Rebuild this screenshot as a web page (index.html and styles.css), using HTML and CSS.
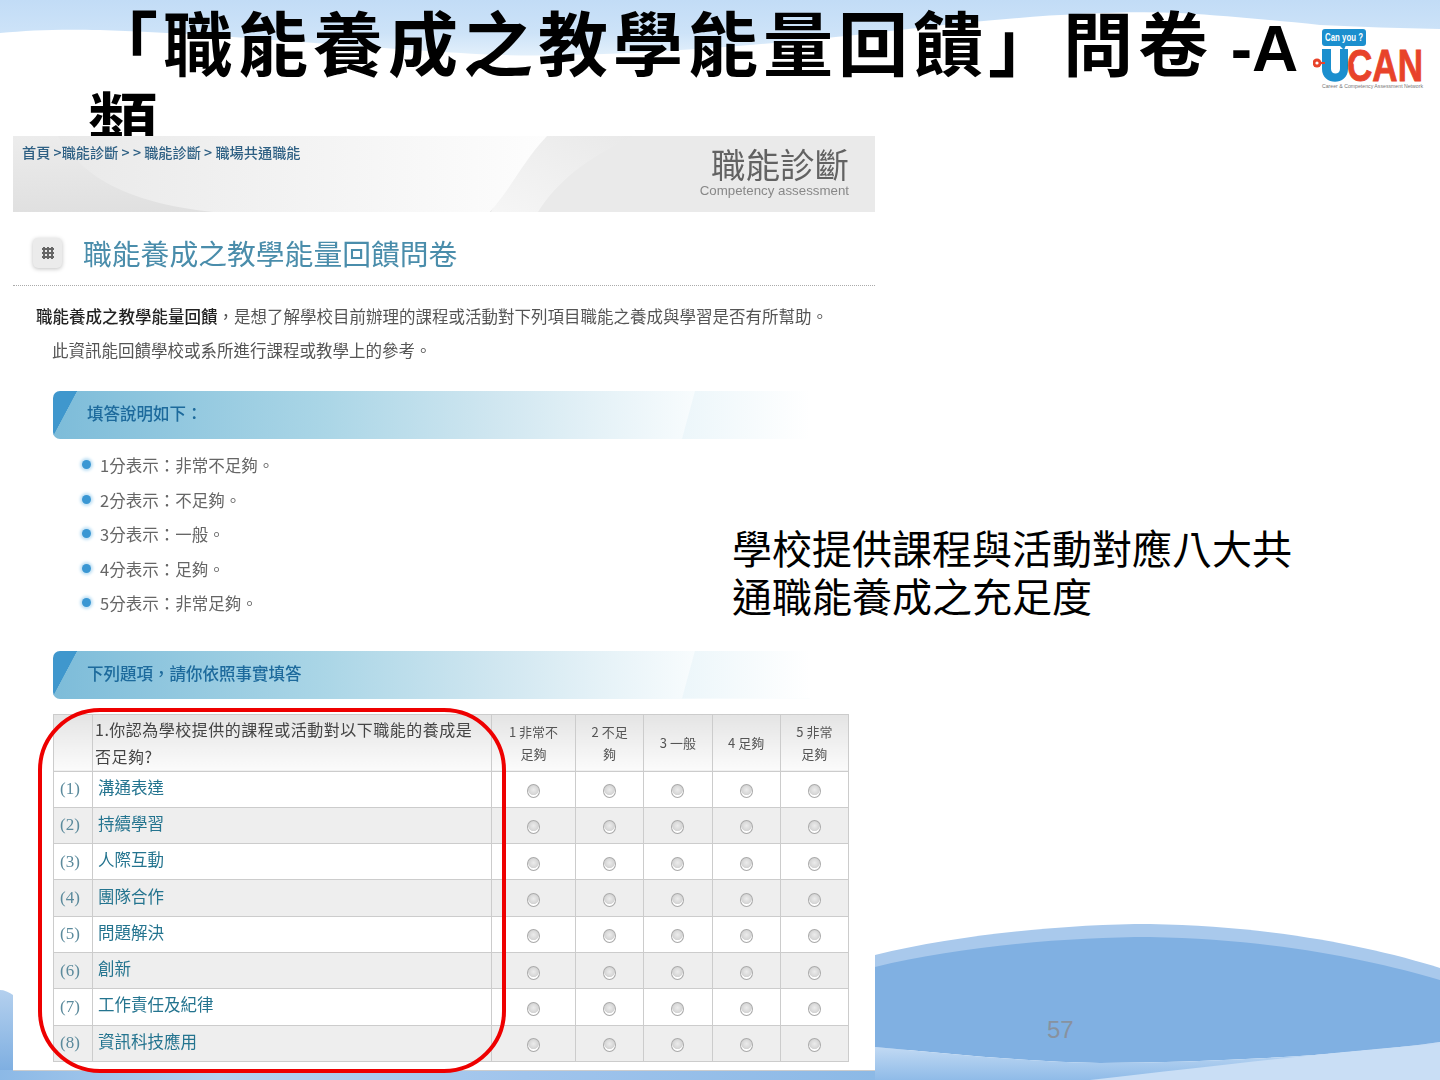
FILE: index.html
```html
<!DOCTYPE html>
<html lang="zh-Hant">
<head>
    <meta charset="UTF-8">
    <title>職能養成之教學能量回饋問卷</title>
    <link rel="stylesheet" href="styles.css">
</head>
<body>
    <div class="slide">
        <!-- slide background waves -->
        <svg class="slide-bg" width="1440" height="1080" viewBox="0 0 1440 1080">
            <defs>
                <linearGradient id="topWave" x1="0" y1="0" x2="0" y2="1">
                    <stop offset="0" stop-color="#c2dcf6"/>
                    <stop offset="0.6" stop-color="#cde3f8"/>
                    <stop offset="1" stop-color="#e3f0fb"/>
                </linearGradient>
                <linearGradient id="lowWave" x1="0" y1="0" x2="0" y2="1">
                    <stop offset="0" stop-color="#c9def5"/>
                    <stop offset="1" stop-color="#8fbbe8"/>
                </linearGradient>
                <linearGradient id="bottomStrip" x1="0" y1="0" x2="1" y2="0">
                    <stop offset="0" stop-color="#8cb9e6"/>
                    <stop offset="0.25" stop-color="#b4d2f0"/>
                    <stop offset="0.6" stop-color="#a0c4ec"/>
                    <stop offset="1" stop-color="#8cb9e6"/>
                </linearGradient>
                <linearGradient id="leftPiece" x1="0" y1="0" x2="0" y2="1">
                    <stop offset="0" stop-color="#b4d0ee"/>
                    <stop offset="1" stop-color="#7fafe1"/>
                </linearGradient>
            </defs>
            <path d="M0 0H1440V29C1400 28 1360 27 1320 25C1270 20 1230 16 1180 13C1100 10 1000 18 900 30C780 44 620 58 500 55C380 50 230 34 100 30C60 29 30 30 0 33Z" fill="url(#topWave)"/>
            <path d="M875 955C960 934 1070 924 1150 924C1270 926 1370 946 1440 968V1050H875Z" fill="#a9c9ec"/>
            <path d="M875 967C960 946 1070 937 1150 937C1270 939 1370 959 1440 980V1042C1340 1056 1220 1062 1100 1063C1030 1062 950 1054 875 1047Z" fill="#80b0e2"/>
            <path d="M875 1047C950 1054 1030 1062 1100 1063C1220 1062 1340 1056 1440 1042V1080H875Z" fill="url(#lowWave)"/>
            <path d="M1090 1080C1230 1064 1350 1050 1440 1044V1080Z" fill="#c9def5"/>
            <path d="M0 990C4 990 9 992 13 995V1070H0Z" fill="url(#leftPiece)"/>
            <rect x="0" y="1070" width="875" height="10" fill="url(#bottomStrip)"/>
        </svg>

        <h1 class="slide-title">「職能養成之教學能量回饋」問卷<span class="title-latin"> -A</span><br>類</h1>

        <svg class="ucan-logo" width="127" height="64" viewBox="0 0 127 64">
            <rect x="9" y="0" width="44" height="17" rx="3" fill="#1b8fce"/>
            <path d="M26 16h7l-2 5z" fill="#1b8fce"/>
            <text class="ucan-can-you" x="12" y="12" textLength="38" lengthAdjust="spacingAndGlyphs">Can you ?</text>
            <path d="M9 20H18V40C18 46 27 46 27 40V20H35V40C35 57 9 57 9 40Z" fill="#1b8fce"/>
            <text class="ucan-can" x="34" y="52" textLength="76" lengthAdjust="spacingAndGlyphs">CAN</text>
            <circle cx="4" cy="34" r="4.5" fill="#e8432a"/>
            <circle cx="4" cy="34" r="1.6" fill="#fff"/>
            <rect x="8" y="33" width="4" height="2" fill="#e8432a"/>
            <circle cx="42" cy="34" r="1.8" fill="#fff"/>
            <circle cx="50" cy="34" r="1.8" fill="#fff"/>
            <text class="ucan-sub" x="9" y="59" textLength="101" lengthAdjust="spacingAndGlyphs">Career &amp; Competency Assessment Network</text>
        </svg>

        <!-- captured page pasted on the slide -->
        <div class="capture">
            <div class="crumb-band">
                <svg class="crumb-bg" width="862" height="76" viewBox="0 0 862 76">
                    <defs>
                        <linearGradient id="band" x1="0" y1="0" x2="0" y2="1">
                            <stop offset="0" stop-color="#ececec"/>
                            <stop offset="1" stop-color="#e0e0e0"/>
                        </linearGradient>
                        <linearGradient id="bandLight" x1="0" y1="0" x2="1" y2="0">
                            <stop offset="0" stop-color="#e9e9e9"/>
                            <stop offset="1" stop-color="#fdfdfd"/>
                        </linearGradient>
                        <linearGradient id="bandSoft" x1="0" y1="1" x2="1" y2="0">
                            <stop offset="0" stop-color="#f6f6f6"/>
                            <stop offset="1" stop-color="#e9e9e9"/>
                        </linearGradient>
                    </defs>
                    <rect width="862" height="76" fill="url(#band)"/>
                    <path d="M480 76C500 50 520 25 590 0H862V76Z" fill="#eaeaea"/>
                    <path d="M525 76C545 45 570 25 620 0H470C510 25 490 50 478 76Z" fill="url(#bandSoft)"/>
                    <path d="M45 0C70 40 110 66 200 76H477C500 50 510 25 534 0Z" fill="url(#bandLight)"/>
                </svg>
                <div class="crumbs">首頁 &gt;職能診斷 &gt; &gt; 職能診斷 &gt; 職場共通職能</div>
                <div class="band-title">
                    <div class="band-title-zh">職能診斷</div>
                    <div class="band-title-en">Competency assessment</div>
                </div>
            </div>

            <div class="page-head">
                <div class="head-icon"><span class="head-dots"></span></div>
                <h2>職能養成之教學能量回饋問卷</h2>
            </div>

            <p class="intro"><span class="intro-strong">職能養成之教學能量回饋</span>，是想了解學校目前辦理的課程或活動對下列項目職能之養成與學習是否有所幫助。</p>
            <p class="intro intro-second">此資訊能回饋學校或系所進行課程或教學上的參考。</p>

            <div class="section-bar">填答說明如下：</div>
            <ul class="scale-list">
                <li>1分表示：非常不足夠。</li>
                <li>2分表示：不足夠。</li>
                <li>3分表示：一般。</li>
                <li>4分表示：足夠。</li>
                <li>5分表示：非常足夠。</li>
            </ul>

            <div class="section-bar section-bar-second">下列題項，請你依照事實填答</div>

            <div class="table-wrap">
                <table class="survey">
                    <colgroup>
                        <col class="col-no"><col class="col-item">
                        <col class="col-a"><col class="col-b"><col class="col-b"><col class="col-b"><col class="col-b">
                    </colgroup>
                    <thead>
                        <tr>
                            <th></th>
                            <th class="th-question">1.你認為學校提供的課程或活動對以下職能的養成是否足夠?</th>
                            <th>1 非常不足夠</th>
                            <th>2 不足夠</th>
                            <th>3 一般</th>
                            <th>4 足夠</th>
                            <th>5 非常足夠</th>
                        </tr>
                    </thead>
                    <tbody>
                        <tr><td class="no">(1)</td><td class="item">溝通表達</td><td><i class="radio"></i></td><td><i class="radio"></i></td><td><i class="radio"></i></td><td><i class="radio"></i></td><td><i class="radio"></i></td></tr>
                        <tr><td class="no">(2)</td><td class="item">持續學習</td><td><i class="radio"></i></td><td><i class="radio"></i></td><td><i class="radio"></i></td><td><i class="radio"></i></td><td><i class="radio"></i></td></tr>
                        <tr><td class="no">(3)</td><td class="item">人際互動</td><td><i class="radio"></i></td><td><i class="radio"></i></td><td><i class="radio"></i></td><td><i class="radio"></i></td><td><i class="radio"></i></td></tr>
                        <tr><td class="no">(4)</td><td class="item">團隊合作</td><td><i class="radio"></i></td><td><i class="radio"></i></td><td><i class="radio"></i></td><td><i class="radio"></i></td><td><i class="radio"></i></td></tr>
                        <tr><td class="no">(5)</td><td class="item">問題解決</td><td><i class="radio"></i></td><td><i class="radio"></i></td><td><i class="radio"></i></td><td><i class="radio"></i></td><td><i class="radio"></i></td></tr>
                        <tr><td class="no">(6)</td><td class="item">創新</td><td><i class="radio"></i></td><td><i class="radio"></i></td><td><i class="radio"></i></td><td><i class="radio"></i></td><td><i class="radio"></i></td></tr>
                        <tr><td class="no">(7)</td><td class="item">工作責任及紀律</td><td><i class="radio"></i></td><td><i class="radio"></i></td><td><i class="radio"></i></td><td><i class="radio"></i></td><td><i class="radio"></i></td></tr>
                        <tr><td class="no">(8)</td><td class="item">資訊科技應用</td><td><i class="radio"></i></td><td><i class="radio"></i></td><td><i class="radio"></i></td><td><i class="radio"></i></td><td><i class="radio"></i></td></tr>
                    </tbody>
                </table>
                <div class="red-ring"></div>
            </div>
        </div>

        <p class="side-note">學校提供課程與活動對應八大共通職能養成之充足度</p>
        <div class="page-no">57</div>
    </div>
</body>
</html>
```

FILE: styles.css
```css
* {
    box-sizing: border-box;
}

html, body {
    margin: 0;
    padding: 0;
    background: white;
}

body {
    font-family: "Liberation Sans", "Noto Sans CJK TC", sans-serif;
}

.slide {
    position: relative;
    width: 1440px;
    height: 1080px;
    overflow: hidden;
    background: white;
}

.slide-bg {
    position: absolute;
    left: 0;
    top: 0;
}

.slide-title {
    position: absolute;
    left: 88px;
    top: 8px;
    width: 1230px;
    margin: 0;
    font-size: 70px;
    font-weight: bold;
    line-height: 78px;
    letter-spacing: 5px;
    color: black;
}

.title-latin {
    font-size: 64px;
    letter-spacing: 0;
}

.ucan-logo {
    position: absolute;
    left: 1313px;
    top: 29px;
}

.ucan-can-you {
    font: bold 11px "Liberation Sans", sans-serif;
    fill: white;
}

.ucan-can {
    font: bold 44px "Liberation Sans", sans-serif;
    fill: #e8432a;
    stroke: #e8432a;
    stroke-width: 0.8px;
}

.ucan-sub {
    font: 5px "Liberation Sans", sans-serif;
    fill: #777;
}

.capture {
    position: absolute;
    left: 13px;
    top: 136px;
    width: 862px;
    height: 935px;
    background: white;
    border-bottom: 1px solid #ccc;
    color: #555;
    font-family: "Noto Sans CJK TC", sans-serif;
    filter: blur(0.4px);
}

.crumb-band {
    position: relative;
    height: 76px;
    display: flex;
    justify-content: space-between;
}

.crumb-bg {
    position: absolute;
    left: 0;
    top: 0;
}

.crumbs {
    position: relative;
    padding: 8px 0 0 9px;
    font-size: 14.2px;
    font-weight: 500;
    line-height: 17px;
    color: #2d5f83;
}

.band-title {
    position: relative;
    padding: 7px 26px 0 0;
    text-align: right;
}

.band-title-zh {
    font-size: 34.5px;
    line-height: 40px;
    color: #626262;
}

.band-title-en {
    font-family: "Liberation Sans", sans-serif;
    font-size: 13.3px;
    line-height: 16px;
    color: #888;
}

.page-head {
    display: flex;
    align-items: center;
    gap: 21px;
    height: 74px;
    padding: 8px 0 0 20px;
    border-bottom: 1px dotted #aaa;
}

.page-head h2 {
    margin: 0;
    font-size: 28.8px;
    font-weight: normal;
    line-height: 40px;
    color: #4a8dab;
}

.head-icon {
    display: flex;
    align-items: center;
    justify-content: center;
    width: 29px;
    height: 30px;
    border-radius: 5px;
    background: #ebebeb;
    box-shadow: 0 1px 4px rgba(0, 0, 0, 0.25);
}

.head-dots {
    width: 12px;
    height: 12px;
    background:
        radial-gradient(circle, #666 1.6px, transparent 2px) 0 0 / 4px 4px;
}

.intro {
    margin: 0;
    padding-left: 23px;
    font-size: 16.5px;
    line-height: 34px;
    color: #555;
}

.intro:first-of-type {
    margin-top: 13px;
}

.intro-strong {
    font-weight: 500;
    color: #222;
}

.intro-second {
    padding-left: 39px;
}

.section-bar {
    position: relative;
    width: 757px;
    height: 48px;
    margin: 24px 0 0 40px;
    padding-left: 34px;
    border-radius: 7px 0 0 7px;
    font-size: 16.5px;
    font-weight: 500;
    line-height: 44px;
    color: #1d6a9c;
    background:
        linear-gradient(118deg, #3f97cd 0, #3f97cd 21px, transparent 21.5px),
        linear-gradient(90deg, #7dbcd9 0%, #a9d5e6 35%, #cfe6f0 58%, #fafdfe 86%);
}

/* pale slanted stripe at the fading end of the bar */
.section-bar::after {
    content: "";
    position: absolute;
    left: 629px;
    top: 0;
    width: 128px;
    height: 48px;
    background: linear-gradient(90deg, #ecf6fa, white);
    clip-path: polygon(13px 0, 100% 0, 100% 100%, 0 100%);
}

.section-bar-second {
    margin-top: 30px;
}

.scale-list {
    margin: 9px 0 0;
    padding: 0 0 0 66px;
    list-style: none;
}

.scale-list li {
    position: relative;
    padding-left: 21px;
    font-size: 16.5px;
    line-height: 34.5px;
    color: #666;
}

.scale-list li::before {
    content: "";
    position: absolute;
    left: 3px;
    top: 12px;
    width: 9px;
    height: 9px;
    border-radius: 50%;
    background: #3a97d3;
    box-shadow: 0 0 3px 2px #bfe0f4;
}

.table-wrap {
    position: relative;
    width: 795px;
    margin: 15px 0 0 40px;
}

.survey {
    width: 795px;
    table-layout: fixed;
    border-collapse: collapse;
    border: 1px solid #ccc;
}

.col-no { width: 39px; }
.col-item { width: 399px; }
.col-a { width: 84px; }
.col-b { width: 68.25px; }

.survey th {
    height: 57px;
    padding: 0 12px;
    border: 1px solid #ccc;
    font-size: 13px;
    font-weight: normal;
    line-height: 22px;
    color: #555;
    background: linear-gradient(#e4e4e4, #fbfbfb);
}

.survey .th-question {
    padding: 0 14px 0 2px;
    font-size: 16px;
    line-height: 27px;
    letter-spacing: 0.5px;
    text-align: left;
    color: #444;
}

.survey td {
    height: 36.3px;
    padding: 0;
    border: 1px solid #ccc;
    text-align: center;
}

.survey tbody tr:nth-child(even) td {
    background: #eee;
}

.survey .no {
    font-family: "Liberation Serif", serif;
    font-size: 17px;
    text-align: left;
    padding-left: 6px;
    color: #5b8a9c;
}

.survey .item {
    padding: 0 0 5px 5px;
    font-size: 16.5px;
    text-align: left;
    color: #24748f;
}

.radio {
    display: block;
    width: 13px;
    height: 14px;
    margin: 4px auto 0;
    border: 1px solid #aaa;
    border-radius: 50%;
    background: radial-gradient(circle at 50% 40%, #ececec 0, #d4d4d4 55%, white 62%);
}

.red-ring {
    position: absolute;
    left: -15px;
    top: -6px;
    width: 468px;
    height: 365px;
    border: 4px solid #ee0000;
    border-radius: 62px;
}

.side-note {
    position: absolute;
    left: 732px;
    top: 523px;
    width: 565px;
    margin: 0;
    font-family: "Noto Sans CJK TC", sans-serif;
    font-size: 40px;
    line-height: 48px;
    color: black;
}

.page-no {
    position: absolute;
    left: 1047px;
    top: 1016px;
    font-size: 24px;
    line-height: 28px;
    color: #88929f;
}
```
